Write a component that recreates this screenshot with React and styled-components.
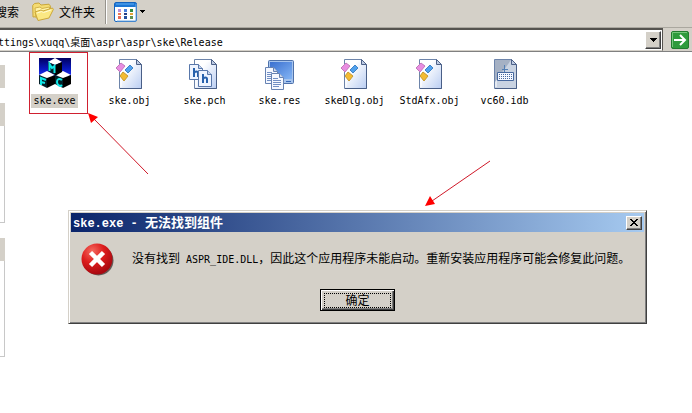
import React from 'react';
import styled, { createGlobalStyle, css } from 'styled-components';

const face = '#d4d0c8';
const latin = '"DejaVu Sans Mono", "Noto Sans CJK SC", monospace';
const cjk = '"Noto Sans CJK SC", sans-serif';

const GlobalStyle = createGlobalStyle`
  * { box-sizing: border-box; }
  body { margin: 0; background: #fff; color: #000; overflow: hidden; }
  button, input { margin: 0; padding: 0; border: 0; color: inherit; }
`;

const Screen = styled.div`
  position: relative;
  display: flex;
  flex-direction: column;
  min-height: 100vh;
  font: 12px/16px ${cjk};
  overflow: hidden;
`;

const Toolbar = styled.header`
  display: flex;
  align-items: center;
  height: 28px;
  padding-bottom: 4px;
  background: ${face};
  border-bottom: 1px solid #aaa79f;
`;

const ToolButton = styled.button`
  display: flex;
  align-items: center;
  gap: ${(p) => p.$gap || 5}px;
  flex: none;
  background: none;
  font: 12px/16px ${cjk};
  white-space: nowrap;
`;

const SearchButton = styled(ToolButton)`
  width: 19px;
  margin-right: 13px;
  justify-content: flex-end;
  overflow: hidden;
`;

const Separator = styled.span`
  width: 2px;
  height: 24px;
  margin: 0 7px 0 10px;
  border-left: 1px solid #96938c;
  border-right: 1px solid #fff;
`;

const AddressBar = styled.form`
  display: flex;
  align-items: center;
  height: 24px;
  padding-right: 3px;
  gap: 8px;
  background: ${face};
  border-bottom: 1px solid #808080;
`;

const Combo = styled.div`
  display: flex;
  flex: 1;
  align-items: center;
  height: 23px;
  padding-right: 1px;
  background: #fff;
  border-top: 2px solid #55534f;
  border-right: 1px solid #55534f;
  border-bottom: 1px solid ${face};
`;

const AddressInput = styled.input`
  flex: 1;
  min-width: 0;
  height: 20px;
  padding-top: 2px;
  font: 10px/18px ${latin};
  text-indent: -2px;
  background: none;
  outline: none;
`;

const raised = css`
  background: ${face};
  border: 1px solid;
  border-color: #fff #404040 #404040 #fff;
  box-shadow: inset -1px -1px #808080;
`;

const SmallButton = styled.button`
  display: grid;
  place-items: center;
  flex: none;
  width: 16px;
  height: ${(p) => p.$height}px;
  && { ${raised} }
`;

const GoButton = styled.button`
  display: grid;
  flex: none;
  width: 18px;
  height: 18px;
  background: none;
`;

const Content = styled.main`
  display: flex;
  flex: 1;
  align-items: flex-start;
`;

const SidePane = styled.aside`
  display: flex;
  flex-direction: column;
  gap: 15px;
  width: 5px;
  padding-top: 13px;
`;

const SideHeader = styled.div`
  height: 23px;
  background: ${face};
`;

const SideBody = styled.div`
  height: ${(p) => p.$height}px;
  border: solid #c8c8c8;
  border-width: 0 1px 1px 0;
`;

const FileList = styled.ul`
  display: flex;
  flex-wrap: wrap;
  flex: 1;
  margin: 0;
  padding: 0 0 0 12px;
  list-style: none;
`;

const FileItem = styled.li`
  position: relative;
  display: flex;
  flex-direction: column;
  align-items: center;
  gap: 4px;
  width: 75px;
  padding-top: 6px;
`;

const FileName = styled.span`
  height: 14px;
  padding: 0 2px;
  font: 10px/14px ${latin};
  background: ${(p) => (p.$selected ? face : 'transparent')};
`;

const Marker = styled.span`
  position: absolute;
  top: 0;
  left: 12px;
  width: 59px;
  height: 62px;
  border: 1px solid #d02030;
`;

const Arrows = styled.svg`
  position: absolute;
  top: 0;
  left: 0;
  pointer-events: none;
`;

const Dialog = styled.section`
  position: absolute;
  top: 210px;
  left: 68px;
  right: 45px;
  padding: 1px;
  background: ${face};
  border: 1px solid;
  border-color: ${face} #404040 #404040 ${face};
  box-shadow: inset 1px 1px #fff, inset -1px -1px #808080;
`;

const TitleBar = styled.div`
  display: flex;
  align-items: center;
  justify-content: space-between;
  height: 19px;
  margin: 1px;
  padding: 0 2px;
  background: linear-gradient(to right, #0a246a, #a6caf0);
`;

const Title = styled.h1`
  margin: 0;
  color: #fff;
  font: bold 13px/18px ${cjk};
`;

const TitleLatin = styled.span`
  font: bold 12px/18px "Liberation Mono", monospace;
  white-space: pre;
`;

const DialogBody = styled.div`
  display: flex;
  align-items: center;
  gap: 18px;
  padding: 10px 10px 0 11px;
`;

const Message = styled.p`
  margin: 0 0 2px;
  white-space: nowrap;
`;

const Latin = styled.span`
  font: 10px/16px ${latin};
  white-space: pre;
`;

const Actions = styled.div`
  display: flex;
  justify-content: center;
  padding: 13px 0 11px;
`;

const OkButton = styled.button`
  width: 75px;
  height: 22px;
  && {
    padding: 2px;
    border: 1px solid #000;
  }
  background: ${face};
  box-shadow: inset 1px 1px #fff, inset -1px -1px #404040, inset -2px -2px #808080;
  font: 12px/14px ${cjk};
`;

const FocusRing = styled.span`
  display: block;
  margin: 0 1px;
  height: 15px;
  line-height: 12px;
  border: 1px dotted #000;
`;

const Caret = ({ small }) => small ? (
  <svg width="5" height="3" viewBox="0 0 5 3" shapeRendering="crispEdges" aria-hidden="true">
    <path d="M0 0h5v1H4v1H3v1H2V2H1V1H0z" />
  </svg>
) : (
  <svg width="7" height="4" viewBox="0 0 7 4" shapeRendering="crispEdges" aria-hidden="true">
    <path d="M0 0h7v1H6v1H5v1H4v1H3V3H2V2H1V1H0z" />
  </svg>
);

const FolderIcon = () => (
  <svg width="22" height="20" viewBox="0 0 22 20" aria-hidden="true">
    <path d="M1 15 0.7 3.5 2.5 1.5 7 1l2 2 8-.8 1.5 2-.5 9z" fill="#f5dc72" stroke="#c9a63a" />
    <path d="M4 16 3 6l5-1 2 1.500 7.500-1.500V14z" fill="#fff3a8" stroke="#d2b24a" />
    <path d="M6 18.500 3 10l6-2 2 1 9.500-3 .8 1.500L17 16z" fill="#fbe883" stroke="#cba63a" />
    <path d="m5 11 4.500-1.500 2 1L19 8" fill="none" stroke="#fffbd5" />
  </svg>
);

const ViewsIcon = () => (
  <svg width="23" height="20" viewBox="0 0 23 20" aria-hidden="true">
    <rect x=".5" y=".5" width="22" height="19" rx="1.500" fill="#fff" stroke="#1463bd" />
    <path d="M1 1h21v4H1z" fill="#1c76d5" />
    <path d="M2 2h18" stroke="#61adf2" />
    <path d="M22 2v17H3" fill="none" stroke="#73a9df" />
    <g>
      <path d="M4 7h3v3H4z" fill="#b791db" /><path d="M10 7h3v3h-3z" fill="#4a80dc" /><path d="M16 7h3v3h-3z" fill="#348b42" />
      <path d="M4 11h3v2H4z" fill="#ed7652" /><path d="M10 11h3v2h-3z" fill="#243d85" /><path d="M16 11h3v2h-3z" fill="#e5a337" />
      <path d="M4 14h3v3H4z" fill="#e66c58" /><path d="M10 14h3v3h-3z" fill="#254f9e" /><path d="M16 14h3v3h-3z" fill="#629251" />
    </g>
  </svg>
);

const GoIcon = () => (
  <svg width="18" height="18" viewBox="0 0 18 18" aria-hidden="true">
    <rect x=".5" y=".5" width="17" height="17" rx="1.500" fill="#2f9b3c" stroke="#227c2e" />
    <path d="M1.500 16V1.500H16" fill="none" stroke="#75c67b" />
    <path d="M3 9h11M9 4l5 5-5 5" fill="none" stroke="#fff" strokeWidth="2" />
  </svg>
);

const MfcIcon = () => (
  <svg width="32" height="32" viewBox="0 0 32 32" aria-hidden="true">
    <defs>
      <linearGradient id="night" x1="0" y1="0" x2="0" y2="1">
        <stop offset="0" stopColor="#000060" />
        <stop offset=".6" stopColor="#0818c0" />
        <stop offset="1" stopColor="#2030f0" />
      </linearGradient>
    </defs>
    <path d="M0 0h32v18H0z" fill="url(#night)" />
    <path d="m9 4 7-4 7 4-7 3zM0 17l8-4 8 4-8 3zM16 17l8-4 8 4-8 3z" fill="#fff" />
    <path d="m16 7 7-3v10l-7 4zM8 20l8-3v9l-8 4zM24 20l8-3v9l-8 4z" fill="#000" />
    <path d="m9 4 7 3v10l-7-4zM0 17l8 3v10l-8-4zM16 17l8 3v10l-8-4z" fill="#042028" />
    <path d="M10.500 13V6l2.500 4 2.500-2v7M2 27v-7l5 2M2 24l4 1M23 22c-3-2-5-1-5 2s3 5 5 3" fill="none" stroke="#10e8e8" strokeWidth="2" />
  </svg>
);

const Page = ({ fill = '#e2ebfb' }) => (
  <>
    <path d="M5.500 1.500h17l5 5v24h-22z" fill={fill} stroke="#6d84aa" />
    <path d="M7 29V3h14" fill="none" stroke="#fff" />
    <path d="M27.500 7v23.500H6" fill="none" stroke="#495f87" />
    <path d="M22.500 1.500v5h5z" fill="#bdcbe2" stroke="#4d6188" />
  </>
);

const ObjIcon = () => (
  <svg width="32" height="32" viewBox="0 0 32 32" aria-hidden="true">
    <Page fill="url(#paper)" />
    <path d="m2 10 5-5 4 3-5 6z" fill="#e98ee1" stroke="#c27abc" />
    <path d="m11 12 5-5 3 3-5 5z" fill="#50a1ed" stroke="#3f83c8" />
    <path d="m6 18 3-4 5 4-4 5z" fill="#f4bb32" stroke="#c89a30" />
  </svg>
);

const HeaderSheet = ({ x, y, height }) => (
  <svg x={x} y={y} width="15" height={height} viewBox={`0 0 15 ${height}`}>
    <path d={`M.5.500h9l4 4v${height - 5}H.5z`} fill="#eef4ff" stroke="#5877aa" />
    <path d="M9.500.500v4h4" fill="#c6d4eb" stroke="#5877aa" />
    <path d="M5 4v9M5 9c1-2 4-2 4 0v4" fill="none" stroke="#2761ac" strokeWidth="2" />
  </svg>
);

const PchIcon = () => (
  <svg width="32" height="32" viewBox="0 0 32 32" aria-hidden="true">
    <Page fill="url(#paper)" />
    <HeaderSheet x="0" y="6" height={16} />
    <HeaderSheet x="9" y="12" height={17} />
  </svg>
);

const LinedSheet = ({ x, y }) => (
  <svg x={x} y={y} width="13" height="17" viewBox="0 0 13 17">
    <path d="M.5.500h8l4 4v12H.5z" fill="#f5f8ff" stroke="#6682b2" />
    <path d="M8.500.500v4h4" fill="#cbd7eb" stroke="#6682b2" />
    <path d="M2 5.500h5M2 7.500h8M2 9.500h8M2 11.500h8M2 13.500h6" stroke="#718fc4" />
  </svg>
);

const ResIcon = () => (
  <svg width="32" height="32" viewBox="0 0 32 32" aria-hidden="true">
    <rect x="4.500" y="2.500" width="25" height="23" rx="1" fill="#a6c4ed" stroke="#4e71aa" />
    <path d="M6 4h22v17H6z" fill="url(#monitor)" />
    <path d="M22 23.500h5" stroke="#3567b9" />
    <LinedSheet x="1" y="9" />
    <LinedSheet x="7" y="15" />
  </svg>
);

const IdbIcon = () => (
  <svg width="32" height="32" viewBox="0 0 32 32" aria-hidden="true">
    <Page fill="#c9d3e2" />
    <path d="M6 2h16L6 24z" fill="#a5b1c4" />
    <path d="M15.500 7v7M13 11.500h6" stroke="#5480b5" />
    <path d="M8.500 14.500h16v8h-16z" fill="#f5f8ff" stroke="#47699f" />
    <path d="M10 16.500h13M10 18.500h13M10 20.500h13" stroke="#47699f" strokeDasharray="1 1" shapeRendering="crispEdges" />
  </svg>
);

const ErrorIcon = () => (
  <svg width="33" height="33" viewBox="0 0 33 33" aria-hidden="true">
    <defs>
      <radialGradient id="stop" cx=".35" cy=".25" r=".75">
        <stop offset="0" stopColor="#f46a60" />
        <stop offset=".5" stopColor="#dd1d1d" />
        <stop offset="1" stopColor="#a80810" />
      </radialGradient>
    </defs>
    <circle cx="17.500" cy="17.500" r="15" fill="#625b57" />
    <circle cx="16" cy="16" r="15.500" fill="url(#stop)" />
    <path d="m9.500 9.500 13 13m0-13-13 13" stroke="#fff" strokeWidth="4.500" />
  </svg>
);

const SharedPaints = () => (
  <defs>
    <linearGradient id="paper" x1="0" y1="0" x2="1" y2="1">
      <stop offset=".3" stopColor="#fff" />
      <stop offset="1" stopColor="#b9cdf2" />
    </linearGradient>
    <linearGradient id="monitor" x1="0" y1="0" x2="1" y2="1">
      <stop offset="0" stopColor="#3a70d0" />
      <stop offset="1" stopColor="#83b4f4" />
    </linearGradient>
  </defs>
);

const files = [
  { name: 'ske.exe', Icon: MfcIcon, selected: true },
  { name: 'ske.obj', Icon: ObjIcon },
  { name: 'ske.pch', Icon: PchIcon },
  { name: 'ske.res', Icon: ResIcon },
  { name: 'skeDlg.obj', Icon: ObjIcon },
  { name: 'StdAfx.obj', Icon: ObjIcon },
  { name: 'vc60.idb', Icon: IdbIcon },
];

export default function App() {
  return (
    <Screen>
      <GlobalStyle />
      <Toolbar>
        <SearchButton type="button">搜索</SearchButton>
        <ToolButton type="button"><FolderIcon />文件夹</ToolButton>
        <Separator />
        <ToolButton type="button" $gap={3} aria-label="查看"><ViewsIcon /><Caret small /></ToolButton>
      </Toolbar>
      <AddressBar onSubmit={(e) => e.preventDefault()}>
        <Combo>
          <AddressInput aria-label="地址" defaultValue="ttings\xuqq\桌面\aspr\aspr\ske\Release" />
          <SmallButton type="button" $height={18} aria-label="展开"><Caret /></SmallButton>
        </Combo>
        <GoButton type="submit" aria-label="转到"><GoIcon /></GoButton>
      </AddressBar>
      <Content>
        <SidePane>
          <SideHeader />
          <div><SideHeader /><SideBody $height={97} /></div>
          <div><SideHeader /><SideBody $height={96} /></div>
        </SidePane>
        <FileList>
          {files.map(({ name, Icon, selected }) => (
            <FileItem key={name}>
              <Icon />
              <FileName $selected={selected}>{name}</FileName>
              {selected && <Marker />}
            </FileItem>
          ))}
        </FileList>
      </Content>
      <Arrows width="692" height="413" viewBox="0 0 692 413" aria-hidden="true">
        <SharedPaints />
        <path d="m148 174-54-55M490 161l-58 40" stroke="#d01828" fill="none" />
        <path d="m88 113 10 4-7 6zM425 206l5-10 5 8z" fill="#f00" />
      </Arrows>
      <Dialog role="alertdialog" aria-labelledby="dialog-title" aria-describedby="dialog-text">
        <TitleBar>
          <Title id="dialog-title"><TitleLatin>ske.exe - </TitleLatin>无法找到组件</Title>
          <SmallButton type="button" $height={14} aria-label="关闭">
            <svg width="8" height="7" viewBox="0 0 8 7" shapeRendering="crispEdges" aria-hidden="true">
              <path d="M0 0h2v1h1v1h2V1h1V0h2v1H7v1H6v1H5v1h1v1h1v1h1v1H6V6H5V5H3v1H2v1H0V6h1V5h1V4h1V3H2V2H1V1H0z" />
            </svg>
          </SmallButton>
        </TitleBar>
        <DialogBody>
          <ErrorIcon />
          <Message id="dialog-text">
            没有找到<Latin> ASPR_IDE.DLL</Latin>，因此这个应用程序未能启动。重新安装应用程序可能会修复此问题。
          </Message>
        </DialogBody>
        <Actions>
          <OkButton type="button"><FocusRing>确定</FocusRing></OkButton>
        </Actions>
      </Dialog>
    </Screen>
  );
}
